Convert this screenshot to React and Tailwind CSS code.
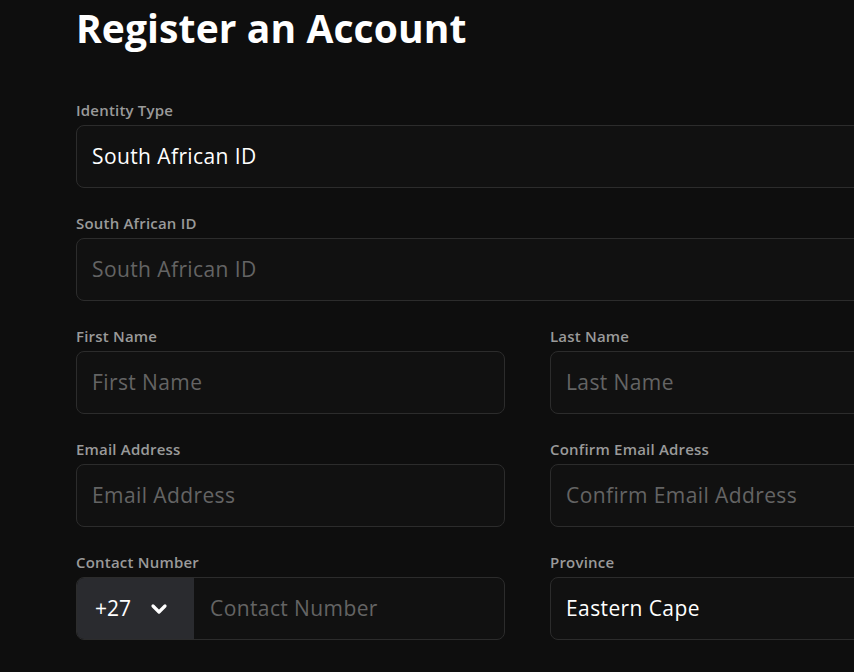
import React from 'react';
import { ChevronDown } from 'lucide-react';

const font = { fontFamily: '"Open Sans", "Noto Sans", sans-serif' };

const Field = ({ label, placeholder, value, className = '' }) => (
    <div className={`flex flex-col ${className}`}>
        <label className="text-[15px] leading-5 font-semibold tracking-[0.2px] text-[#9a9a9a] mb-[5px]">{label}</label>
        <div className="h-[63px] rounded-lg border border-[#2c2c2c] bg-[#111111] flex items-center px-[15px]">
            {value ? (
                <span className="text-[21px] tracking-[0.4px] text-white">{value}</span>
            ) : (
                <span className="text-[21px] tracking-[0.4px] text-[#646464]">{placeholder}</span>
            )}
        </div>
    </div>
);

const App = () => {
    return (
        <div className="w-[854px] h-[672px] overflow-hidden bg-[#0e0e0e]" style={font}>
            <div className="w-[903px] ml-[76px] pt-[8px]">
                <h1 className="text-[39px] leading-10 font-bold tracking-[0.1px] text-white">Register an Account</h1>

                <div className="mt-[52px] flex flex-col gap-[25px]">
                    <Field label="Identity Type" value="South African ID" />
                    <Field label="South African ID" placeholder="South African ID" />

                    <div className="grid grid-cols-2 gap-x-[45px] gap-y-[25px]">
                        <Field label="First Name" placeholder="First Name" />
                        <Field label="Last Name" placeholder="Last Name" />
                        <Field label="Email Address" placeholder="Email Address" />
                        <Field label="Confirm Email Adress" placeholder="Confirm Email Address" />

                        {/* Contact number with country code */}
                        <div className="flex flex-col">
                            <label className="text-[15px] leading-5 font-semibold tracking-[0.2px] text-[#9a9a9a] mb-[5px]">Contact Number</label>
                            <div className="h-[63px] rounded-lg border border-[#2c2c2c] bg-[#111111] flex overflow-hidden">
                                <div className="w-[117px] bg-[#2a2b2f] flex items-center pl-[18px] gap-[16px]">
                                    <span className="text-[21px] text-white">+27</span>
                                    <ChevronDown className="w-6 h-6 text-white" strokeWidth={3.2} />
                                </div>
                                <div className="flex items-center pl-[16px]">
                                    <span className="text-[21px] tracking-[0.4px] text-[#646464]">Contact Number</span>
                                </div>
                            </div>
                        </div>
                        <Field label="Province" value="Eastern Cape" />
                    </div>
                </div>
            </div>
        </div>
    );
};

export default App;
